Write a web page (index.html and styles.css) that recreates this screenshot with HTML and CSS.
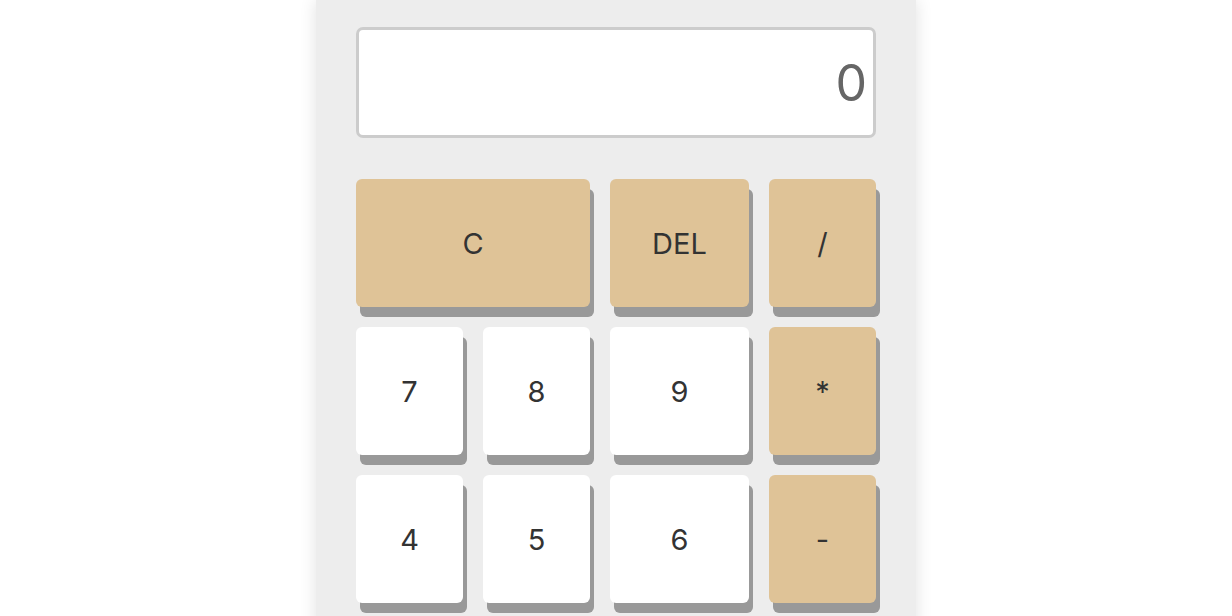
FILE: index.html
```html
<!DOCTYPE html>
<html lang="en">
<head>
<meta charset="utf-8">
<title>Calculator</title>
<link rel="stylesheet" href="styles.css">
</head>
<body>
<div class="calc">
  <div class="display">0</div>
  <div class="keys">
    <button class="key op wide">C</button>
    <button class="key op">DEL</button>
    <button class="key op">/</button>
    <button class="key">7</button>
    <button class="key">8</button>
    <button class="key">9</button>
    <button class="key op">*</button>
    <button class="key">4</button>
    <button class="key">5</button>
    <button class="key">6</button>
    <button class="key op">-</button>
  </div>
</div>
</body>
</html>
```

FILE: styles.css
```css
html, body {
  margin: 0;
  padding: 0;
  background: #ffffff;
  height: 616px;
  overflow: hidden;
}

body {
  display: flex;
  justify-content: center;
  font-family: "Inter", "DejaVu Sans", sans-serif;
}

.calc {
  width: 520px;
  padding: 27px 40px 40px;
  background: #ededed;
  box-shadow: 0 0 16px rgba(0, 0, 0, 0.12);
  align-self: flex-start;
}

.display {
  box-sizing: border-box;
  height: 111px;
  border: 3px solid #cccccc;
  border-radius: 7px;
  background: #ffffff;
  color: #666666;
  font-size: 50px;
  text-align: right;
  padding: 0 6px;
  display: flex;
  align-items: center;
  justify-content: flex-end;
  margin-bottom: 41px;
}

.keys {
  display: grid;
  grid-template-columns: 107px 107px 139px 107px;
  grid-auto-rows: 128px;
  gap: 20px;
}

.key {
  border: none;
  border-radius: 6px;
  background: #ffffff;
  color: #333333;
  font-family: inherit;
  font-size: 29px;
  box-shadow: 4px 10px 0 #999999;
  padding: 0;
  cursor: pointer;
}

.key.op {
  background: #dfc397;
}

.key.wide {
  grid-column: span 2;
}
```
